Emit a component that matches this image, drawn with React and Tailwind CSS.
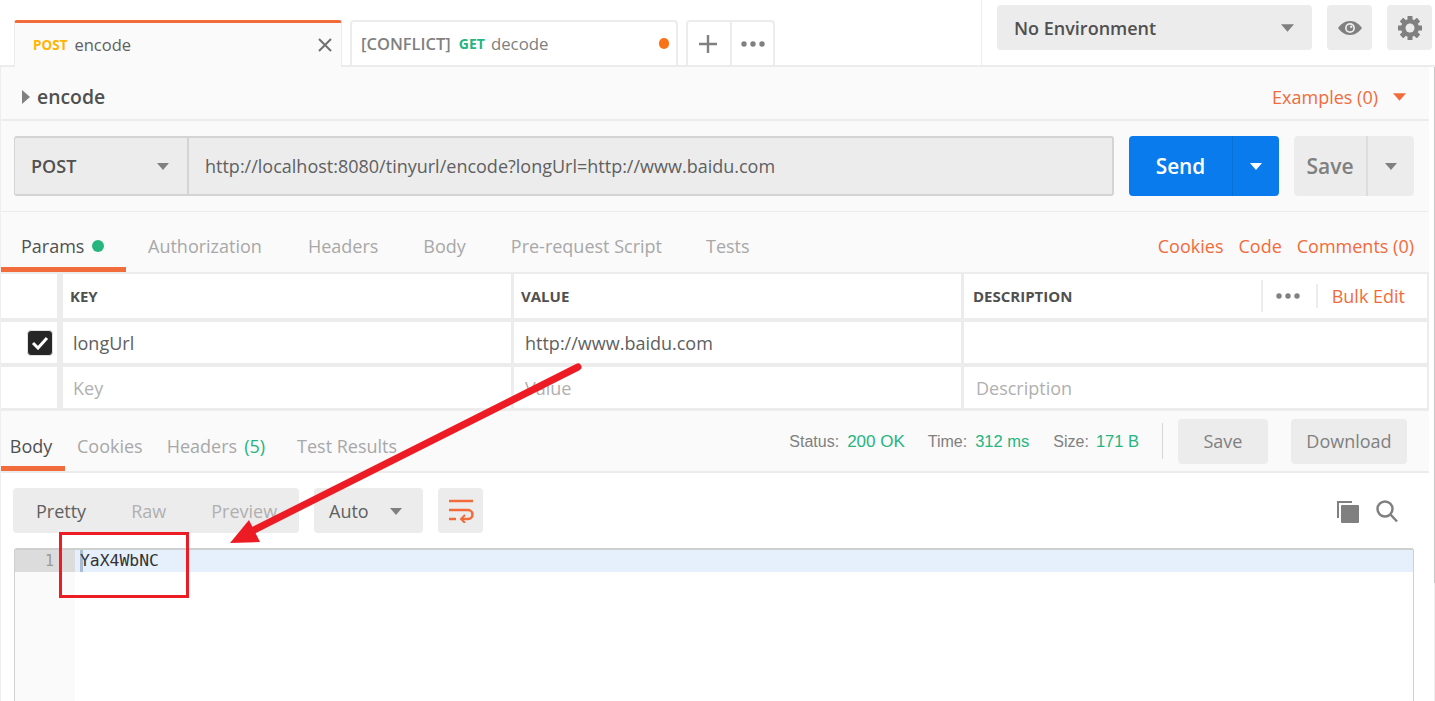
const Caret = ({ className = "fill-[#808080]", w = 12, h = 7 }) => (
  <svg width={w} height={h} viewBox="0 0 12 7" className={className}><path d="M0 0h12L6 7z" /></svg>
);

const Dots = () => (
  <svg width="24" height="6" viewBox="0 0 24 6" className="fill-[#808080]">
    <circle cx="3" cy="3" r="2.7" /><circle cx="12" cy="3" r="2.7" /><circle cx="21" cy="3" r="2.7" />
  </svg>
);

const Tab = ({ children, active, className = "" }) => (
  <div className={`h-[60px] flex items-center text-[18px] ${active ? "text-[#505050] border-b-[5px] border-[#f26b3a]" : "text-[#a8a8a8]"} ${className}`}>{children}</div>
);

export default function App() {
  return (
    <div className="relative w-[1435px] h-[701px] overflow-hidden bg-white text-[#505050] font-['Open_Sans',sans-serif]">
      {/* top bar */}
      <div className="h-[67px] bg-white flex border-b-2 border-[#ececec]">
        <div className="w-[982px] flex items-end pl-[14px] border-r border-[#ececec]">
          <div className="w-[328px] h-[47px] -mb-[2px] relative z-10 bg-[#fafafa] border-t-[3px] border-[#f26b3a] rounded-t-[3px] border-x border-x-[#ececec] flex items-center pl-[18px] pr-[8px]">
            <span className="text-[13.5px] font-bold text-[#ffb400] mr-[7px]">POST</span>
            <span className="text-[16.5px] text-[#606060]">encode</span>
            <svg width="16" height="16" viewBox="0 0 16 16" className="ml-auto stroke-[#707070]" strokeWidth="2"><path d="M2 2l12 12M14 2L2 14" /></svg>
          </div>
          <div className="ml-[8px] w-[328px] h-[45px] bg-white border-2 border-b-0 border-[#ececec] rounded-t-[4px] flex items-center pl-[9px] pr-[7px]">
            <span className="text-[16.5px] font-semibold text-[#808080] mr-[8px] pt-[1px]">[CONFLICT]</span>
            <span className="text-[14px] font-bold text-[#26b47f] mr-[6px]">GET</span>
            <span className="text-[16.8px] text-[#808080]">decode</span>
            <span className="ml-auto w-[10px] h-[11px] rounded-full bg-[#f97316]" />
          </div>
          <div className="ml-[8px] w-[89px] h-[45px] bg-white border-2 border-b-0 border-[#ececec] rounded-t-[4px] flex">
            <div className="w-[44px] pr-[2px] border-r-2 border-[#ececec] flex items-center justify-center">
              <svg width="18" height="18" viewBox="0 0 18 18" className="stroke-[#808080]" strokeWidth="2.4"><path d="M9 0v18M0 9h18" /></svg>
            </div>
            <div className="flex-1 flex items-center justify-center"><Dots /></div>
          </div>
        </div>
        <div className="flex-1 flex items-start pt-[5px] pl-[15px]">
          <div className="w-[315px] h-[45px] rounded-[4px] bg-[#ececec] flex items-center justify-between pl-[17px] pr-[18px]">
            <span className="text-[18px] font-semibold text-[#505050] pt-[1px]">No Environment</span>
            <Caret w={13} h={8} />
          </div>
          <div className="ml-[15px] w-[45px] h-[45px] rounded-[4px] bg-[#ececec] flex items-center justify-center">
            <svg width="24" height="14" viewBox="0 0 24 14">
              <path className="fill-[#808080]" d="M12 0c5.500 0 9.500 3.500 12 7-2.500 3.500-6.500 7-12 7S2.500 10.500 0 7c2.500-3.500 6.500-7 12-7z" />
              <circle cx="12" cy="7" r="5" className="fill-[#ececec]" />
              <circle cx="12" cy="7" r="3.300" className="fill-[#808080]" />
              <circle cx="13.200" cy="5.800" r="1.200" className="fill-[#ececec]" />
            </svg>
          </div>
          <div className="ml-[15px] w-[45px] h-[45px] rounded-[4px] bg-[#ececec] flex items-center justify-center">
            <svg width="24" height="24" viewBox="0 0 24 24">
              <g className="fill-[#808080]">
                <rect x="9.500" y="0" width="5" height="24" rx=".5" />
                <rect x="9.500" y="0" width="5" height="24" rx=".5" transform="rotate(45 12 12)" />
                <rect x="9.500" y="0" width="5" height="24" rx=".5" transform="rotate(90 12 12)" />
                <rect x="9.500" y="0" width="5" height="24" rx=".5" transform="rotate(135 12 12)" />
                <circle cx="12" cy="12" r="9" />
              </g>
              <circle cx="12" cy="12" r="4.500" className="fill-[#ececec]" />
            </svg>
          </div>
        </div>
      </div>

      <div className="w-[1429px] bg-[#fafafa]">
        {/* request name */}
        <div className="h-[54px] border-b-2 border-[#ececec] flex items-center pt-[8px] pl-[22px] pr-[23px]">
          <svg width="8" height="14" viewBox="0 0 8 14" className="fill-[#808080] mr-[7px]"><path d="M0 0l8 7-8 7z" /></svg>
          <span className="text-[19.4px] font-semibold leading-none text-[#505050]">encode</span>
          <span className="ml-auto text-[18px] text-[#f26b3a] mr-[15px]">Examples (0)</span>
          <Caret className="fill-[#f26b3a]" w={13} h={8} />
        </div>

        {/* url row */}
        <div className="h-[91px] border-b border-[#ececec] flex items-start pt-[15px] pl-[14px]">
          <div className="w-[1100px] h-[60px] flex rounded-[3px] bg-[#ececec] border-2 border-l border-[#d4d4d4]">
            <div className="w-[174px] border-r-2 border-[#d4d4d4] flex items-center justify-between pl-[16px] pr-[18px]">
              <span className="text-[18px] font-semibold text-[#505050] pt-[1px]">POST</span>
              <Caret />
            </div>
            <div className="flex-1 flex items-center pl-[16px] pt-[1px] text-[18px] text-[#606060]">http://localhost:8080/tinyurl/encode?longUrl=http://www.baidu.com</div>
          </div>
          <div className="ml-[15px] w-[150px] h-[60px] rounded-[4px] bg-[#097bed] text-white flex">
            <div className="w-[104px] border-r border-[#0a6fd4] flex items-center justify-center pt-[1px] text-[20.8px] font-semibold">Send</div>
            <div className="flex-1 flex items-center justify-center"><Caret className="fill-white" /></div>
          </div>
          <div className="ml-[15px] w-[120px] h-[60px] rounded-[4px] bg-[#ececec] flex">
            <div className="w-[74px] border-r-2 border-[#dcdcdc] flex items-center justify-center text-[21px] font-semibold text-[#808080] pt-[1px]">Save</div>
            <div className="flex-1 flex items-center justify-center"><Caret /></div>
          </div>
        </div>

        {/* request tabs */}
        <div className="h-[60px] flex items-center">
          <Tab active className="w-[126px] pl-[21px] pt-[13px]">Params<span className="ml-[8px] w-[12px] h-[12px] rounded-full bg-[#26b47f]" /></Tab>
          <Tab className="ml-[22px] pt-[8px]">Authorization</Tab>
          <Tab className="ml-[46px] pt-[8px]">Headers</Tab>
          <Tab className="ml-[45px] pt-[8px]">Body</Tab>
          <Tab className="ml-[45px] pt-[8px]">Pre-request Script</Tab>
          <Tab className="ml-[44px] pt-[8px]">Tests</Tab>
          <div className="ml-auto flex gap-[15px] text-[18px] text-[#f26b3a] pr-[15px] pt-[8px]">
            <span>Cookies</span><span>Code</span><span>Comments (0)</span>
          </div>
        </div>

        {/* params table */}
        <div className="h-[139px] bg-[#ececec] pt-[2px] grid grid-cols-[60px_448px_447px_463px] grid-rows-[44px_41px_41px] gap-x-[3px] gap-y-[4px] text-[18px]">
          <div className="bg-white mr-[3px]" />
          <div className="bg-white flex items-center pl-[7px] text-[15px] font-bold text-[#505050]">KEY</div>
          <div className="bg-white flex items-center pl-[7px] text-[15px] font-bold text-[#505050]">VALUE</div>
          <div className="bg-white flex items-center pl-[9px] pr-[22px]">
            <span className="text-[15px] font-bold text-[#505050]">DESCRIPTION</span>
            <div className="ml-auto h-[32px] border-l-2 border-[#ececec] w-[55px] pr-[3px] flex items-center justify-center"><Dots /></div>
            <div className="h-[24px] border-l-2 border-[#ececec] pl-[14px] flex items-center text-[18px] text-[#f26b3a]">Bulk Edit</div>
          </div>

          <div className="bg-white mr-[3px] flex items-center justify-center pl-[23px]">
            <div className="w-[26px] h-[26px] rounded-[4px] bg-[#262626] border border-[#e0e0e0] flex items-center justify-center">
              <svg width="18" height="14" viewBox="0 0 18 14" fill="none" stroke="white" strokeWidth="3"><path d="M2 7l5 5 9-10" /></svg>
            </div>
          </div>
          <div className="bg-white flex items-center pl-[10px] pt-[1px] text-[#606060]">longUrl</div>
          <div className="bg-white flex items-center pl-[11px] pt-[1px] text-[#606060]">http://www.baidu.com</div>
          <div className="bg-white" />

          <div className="bg-white mr-[3px]" />
          <div className="bg-white flex items-center pl-[10px] pt-[1px] text-[#b0b0b0]">Key</div>
          <div className="bg-white flex items-center pl-[11px] pt-[1px] text-[#b0b0b0]">Value</div>
          <div className="bg-white flex items-center pl-[12px] pt-[1px] text-[#b0b0b0]">Description</div>
        </div>

        {/* response tabs */}
        <div className="h-[62px] border-b-2 border-[#ececec] flex items-center">
          <Tab active className="w-[65px] justify-center pr-[3px] pt-[15px]">Body</Tab>
          <Tab className="ml-[12px] pt-[10px]">Cookies</Tab>
          <Tab className="ml-[24px] pt-[10px]">Headers<span className="ml-[7px] text-[#26b47f]">(5)</span></Tab>
          <Tab className="ml-[32px] pt-[10px]">Test Results</Tab>
          <div className="ml-auto flex items-center text-[16px] font-['Liberation_Sans',sans-serif] text-[#808080]">
            <span className="pt-[1px]">Status:</span><span className="ml-[8px] pt-[1px] text-[17px] text-[#26b47f]">200 OK</span>
            <span className="ml-[23px] pt-[1px]">Time:</span><span className="ml-[8px] pt-[1px] text-[16.5px] text-[#26b47f]">312 ms</span>
            <span className="ml-[24px] pt-[1px]">Size:</span><span className="ml-[7px] pt-[1px] text-[16.5px] text-[#26b47f]">171 B</span>
            <div className="ml-[23px] h-[36px] border-l border-[#d8d8d8]" />
            <div className="ml-[15px] w-[90px] h-[45px] rounded-[4px] bg-[#ececec] flex items-center justify-center pt-[1px] text-[18px] font-['Open_Sans',sans-serif]">Save</div>
            <div className="ml-[23px] w-[116px] h-[45px] rounded-[4px] bg-[#ececec] flex items-center justify-center pt-[1px] text-[18px] font-['Open_Sans',sans-serif]">Download</div>
            <div className="w-[22px]" />
          </div>
        </div>
      </div>

      {/* response controls */}
      <div className="bg-white h-[228px] pr-[21px]">
        <div className="h-[75px] flex items-start pt-[15px] pl-[13px]">
          <div className="w-[286px] h-[45px] rounded-[4px] bg-[#ececec] flex items-center pt-[1px] text-[18px]">
            <span className="ml-[23px] text-[#606060]">Pretty</span>
            <span className="ml-[45px] text-[#b0b0b0]">Raw</span>
            <span className="ml-[45px] text-[#b0b0b0]">Preview</span>
          </div>
          <div className="ml-[15px] w-[109px] h-[45px] rounded-[4px] bg-[#ececec] flex items-center justify-between pl-[15px] pr-[21px] pt-[1px] text-[18px] text-[#606060]">
            <span>Auto</span><Caret />
          </div>
          <div className="ml-[15px] w-[45px] h-[45px] rounded-[4px] bg-[#ececec] flex items-center justify-center">
            <svg width="26" height="24" viewBox="0 0 26 24" fill="none" className="stroke-[#f26b3a]" strokeWidth="2.600">
              <path d="M1 2h24M1 11h19a4.500 4.500 0 010 9h-6M1 20h7" />
              <path d="M17 16l-4 4 4 4" strokeWidth="2" />
            </svg>
          </div>
          <div className="ml-auto flex items-center gap-[17px] pr-[16px] pt-[12px]">
            <svg width="22" height="22" viewBox="0 0 22 22" className="fill-[#808080]">
              <path d="M0 0h15v2H2v15H0z" /><rect x="4" y="4" width="18" height="18" rx="1" />
            </svg>
            <svg width="22" height="23" viewBox="0 0 22 23" fill="none" className="stroke-[#808080]" strokeWidth="2.500">
              <circle cx="9" cy="9" r="7.500" /><path d="M14.500 14.500l6.500 7" />
            </svg>
          </div>
        </div>
        <div className="ml-[14px] w-[1400px] h-[153px] border-x border-t-2 border-[#cfcfcf] rounded-t-[3px] flex">
          <div className="w-[60px] bg-[#fafafa]">
            <div className="h-[22px] bg-[#dcdcdc] flex items-center justify-end pr-[21px] pt-[1px] font-['DejaVu_Sans_Mono',monospace] text-[15px] text-[#999999]">1</div>
          </div>
          <div className="flex-1">
            <div className="h-[22px] bg-[#e6f0fc] flex items-center pl-[5px] pt-[1px] font-['DejaVu_Sans_Mono',monospace] text-[16.4px] text-[#333333] relative">
              <span className="absolute left-[5px] top-0 w-[3px] h-[22px] bg-[#a9bdd2]" />
              <span className="relative">YaX4WbNC</span>
            </div>
          </div>
        </div>
      </div>

      {/* screenshot edges */}
      <div className="absolute left-0 top-[67px] bottom-0 w-[1px] bg-[#eeeeee]" />
      <div className="absolute right-0 top-[67px] h-[516px] w-[1px] bg-[#c8c8c8]" />
      <div className="absolute right-0 top-[583px] bottom-0 w-[1px] bg-[#eeeeee]" />

      {/* annotations */}
      <div className="absolute left-[59px] top-[532px] w-[130px] h-[66px] border-[3px] border-[#ed1c24]" />
      <svg className="absolute left-0 top-0 pointer-events-none" width="1435" height="701" viewBox="0 0 1435 701">
        <path d="M578 367L252 531" stroke="#ed1c24" strokeWidth="7" strokeLinecap="round" />
        <path d="M230 543L249 520L260 542z" fill="#ed1c24" />
      </svg>
    </div>
  );
}
